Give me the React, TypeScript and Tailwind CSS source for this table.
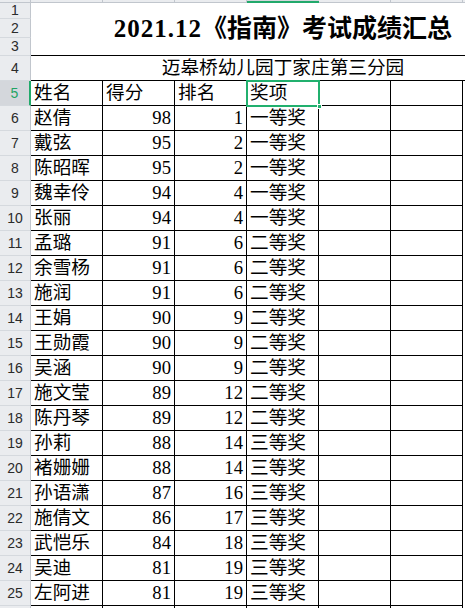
import React from 'react';

const ROWS: [string, number, number, string][] = [
  ['赵倩', 98, 1, '一等奖'],
  ['戴弦', 95, 2, '一等奖'],
  ['陈昭晖', 95, 2, '一等奖'],
  ['魏幸伶', 94, 4, '一等奖'],
  ['张丽', 94, 4, '一等奖'],
  ['孟璐', 91, 6, '二等奖'],
  ['余雪杨', 91, 6, '二等奖'],
  ['施润', 91, 6, '二等奖'],
  ['王娟', 90, 9, '二等奖'],
  ['王勋霞', 90, 9, '二等奖'],
  ['吴涵', 90, 9, '二等奖'],
  ['施文莹', 89, 12, '二等奖'],
  ['陈丹琴', 89, 12, '二等奖'],
  ['孙莉', 88, 14, '三等奖'],
  ['褚姗姗', 88, 14, '三等奖'],
  ['孙语潇', 87, 16, '三等奖'],
  ['施倩文', 86, 17, '三等奖'],
  ['武恺乐', 84, 18, '三等奖'],
  ['吴迪', 81, 19, '三等奖'],
  ['左阿进', 81, 19, '三等奖'],
];

const cellFont = { fontFamily: '"Liberation Serif", "Noto Sans CJK SC", serif' };

const RowHead = ({ n, active }: { n?: number; active?: boolean }) => (
  <div
    className={`flex items-center justify-center text-[14px] border-b border-[#d5d9de] ${
      active
        ? 'bg-[#d4d7dc] text-[#1fa463] border-r-2 border-r-[#21a96b]'
        : 'bg-[#eaecef] text-[#2b2b2b] border-r border-r-[#c1c6cd]'
    }`}
    style={{ fontFamily: '"Liberation Sans", sans-serif' }}
  >
    {n}
  </div>
);

const Cell = ({ children, align = 'left' }: { children?: React.ReactNode; align?: 'left' | 'right' }) => (
  <div
    className={`flex items-center text-[18.67px] text-black whitespace-nowrap overflow-hidden border-b border-r border-black ${
      align === 'right' ? 'justify-end pr-[3px]' : 'pl-[3px]'
    }`}
    style={cellFont}
  >
    {children}
  </div>
);

export default function App() {
  return (
    <div className="w-[465px] h-[608px] overflow-hidden bg-white">
      <div className="grid grid-cols-[31px_repeat(7,72px)] grid-rows-[3px_16px_19px_18px_repeat(23,25px)]">
        {/* column header sliver */}
        <div className="bg-[#eaecef] border-b border-r border-[#c1c6cd]" />
        {[0, 1, 2, 3, 4, 5, 6].map(i => (
          <div
            key={i}
            className={
              i === 3
                ? 'bg-[#d4d7dc] border-b-2 border-[#21a96b]'
                : 'bg-[#eaecef] border-b border-r border-[#c1c6cd]'
            }
          />
        ))}

        {/* title rows 1-3 */}
        <RowHead n={1} />
        <div
          className="col-span-7 row-span-3 flex items-center justify-center border-b border-black text-[25px] font-bold text-black whitespace-nowrap"
          style={cellFont}
        >
          <span className="tracking-[1px]">2021.12</span>《指南》考试成绩汇总
        </div>
        <RowHead n={2} />
        <RowHead n={3} />

        {/* row 4 */}
        <RowHead n={4} />
        <div
          className="col-span-7 flex items-center justify-center border-b border-black text-[18.67px] text-black whitespace-nowrap"
          style={cellFont}
        >
          迈皋桥幼儿园丁家庄第三分园
        </div>

        {/* header row */}
        <RowHead n={5} active />
        <Cell>姓名</Cell>
        <Cell>得分</Cell>
        <Cell>排名</Cell>
        <div className="relative">
          <div className="absolute inset-0 flex items-center pl-[3px] text-[18.67px] text-black border-b border-r border-black" style={cellFont}>
            奖项
          </div>
          <div className="absolute -left-[1px] -top-[1px] w-[74px] h-[27px] border-2 border-[#21b06e]" />
          <div className="absolute -right-[3px] -bottom-[3px] w-[5px] h-[5px] bg-[#21b06e] border border-white" />
        </div>
        <Cell />
        <Cell />
        <div />

        {ROWS.map(([name, score, rank, award], i) => (
          <React.Fragment key={name}>
            <RowHead n={i + 6} />
            <Cell>{name}</Cell>
            <Cell align="right">{score}</Cell>
            <Cell align="right">{rank}</Cell>
            <Cell>{award}</Cell>
            <Cell />
            <Cell />
            <div />
          </React.Fragment>
        ))}

        {/* row 26, only its top edge shows */}
        <RowHead />
        <Cell />
        <Cell />
        <Cell />
        <Cell />
        <Cell />
        <Cell />
        <div />
      </div>
    </div>
  );
}
